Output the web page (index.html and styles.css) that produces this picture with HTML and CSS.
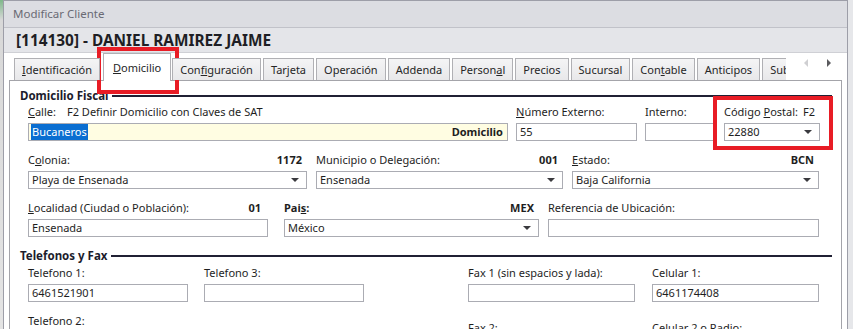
FILE: index.html
```html
<!DOCTYPE html>
<html lang="es">
<head>
  <meta charset="UTF-8" />
  <meta name="viewport" content="width=device-width, initial-scale=1.0"/>
  <title>Modificar Cliente</title>
  <link rel="stylesheet" href="styles.css">
</head>
<body>
  <div class="desk"></div>
  <div class="window">
    <div class="titlebar">Modificar Cliente</div>
    <div class="client-bar">[114130] - DANIEL RAMIREZ JAIME</div>

    <div class="content">
      <div class="tabs-row">
        <div class="tabs">
          <div class="tab"><u>I</u>dentificación</div>
          <div class="tab active"><u>D</u>omicilio</div>
          <div class="tab">Con<u>f</u>iguración</div>
          <div class="tab">Tarjeta</div>
          <div class="tab">Operación</div>
          <div class="tab">Addenda</div>
          <div class="tab">Person<u>a</u>l</div>
          <div class="tab">Precios</div>
          <div class="tab">Sucursal</div>
          <div class="tab">Con<u>t</u>able</div>
          <div class="tab">Anticipos</div>
          <div class="tab">Subclientes</div>
        </div>
        <div class="tab-arrows">
          <span class="arrow arrow-left"></span>
          <span class="arrow arrow-right"></span>
        </div>
      </div>

      <div class="panel">
        <div class="section"><span>Domicilio Fiscal</span><div class="section-line"></div></div>

        <div class="row row-first">
          <div class="field f-calle">
            <div class="label"><span><span class="calle-tag"><u>C</u>alle:</span>F2 Definir Domicilio con Claves de SAT</span></div>
            <div class="box box-yellow"><span class="selected">Bucaneros</span><b>Domicilio</b></div>
          </div>
          <div class="field f-numext">
            <div class="label"><span><u>N</u>úmero Externo:</span></div>
            <div class="box">55</div>
          </div>
          <div class="field f-interno">
            <div class="label"><span>Interno:</span></div>
            <div class="box"></div>
          </div>
          <div class="field f-cp">
            <div class="label"><span>Código <u>P</u>ostal:</span><span>F2</span></div>
            <div class="box"><span>22880</span><span class="caret"></span></div>
          </div>
        </div>

        <div class="row">
          <div class="field f-colonia">
            <div class="label"><span>C<u>o</u>lonia:</span><b>1172</b></div>
            <div class="box"><span>Playa de Ensenada</span><span class="caret"></span></div>
          </div>
          <div class="field f-municipio">
            <div class="label"><span>Municipio o Delegación:</span><b>001</b></div>
            <div class="box"><span>Ensenada</span><span class="caret"></span></div>
          </div>
          <div class="field f-estado">
            <div class="label"><span><u>E</u>stado:</span><b>BCN</b></div>
            <div class="box"><span>Baja California</span><span class="caret"></span></div>
          </div>
        </div>

        <div class="row">
          <div class="field f-localidad">
            <div class="label label-pad"><span><u>L</u>ocalidad (Ciudad o Población):</span><b>01</b></div>
            <div class="box">Ensenada</div>
          </div>
          <div class="field f-pais">
            <div class="label"><b>Pai<u>s</u>:</b><b>MEX</b></div>
            <div class="box"><span>México</span><span class="caret"></span></div>
          </div>
          <div class="field f-referencia">
            <div class="label"><span>Referencia de Ubicación:</span></div>
            <div class="box"></div>
          </div>
        </div>

        <div class="section section-phones"><span>Telefonos y Fax</span><div class="section-line"></div></div>

        <div class="row row-phones">
          <div class="field f-phone">
            <div class="label"><span>Telefono 1:</span></div>
            <div class="box">6461521901</div>
          </div>
          <div class="field f-phone f-tel3">
            <div class="label"><span>Telefono 3:</span></div>
            <div class="box"></div>
          </div>
          <div class="field f-fax f-fax1">
            <div class="label"><span>Fax 1 (sin espacios y lada):</span></div>
            <div class="box"></div>
          </div>
          <div class="field f-fax f-cel">
            <div class="label"><span>Celular 1:</span></div>
            <div class="box">6461174408</div>
          </div>
        </div>

        <div class="row row-last">
          <div class="field f-phone">
            <div class="label"><span>Telefono 2:</span></div>
          </div>
          <div class="field f-fax f-fax2">
            <div class="label label-low"><span>Fax 2:</span></div>
          </div>
          <div class="field f-fax f-cel">
            <div class="label label-low"><span>Celular 2 o Radio:</span></div>
          </div>
        </div>
      </div>
    </div>
  </div>

  <div class="mark mark-tab"></div>
  <div class="mark mark-cp"></div>
</body>
</html>
```

FILE: styles.css
```css
body {
  margin: 0;
  width: 853px;
  height: 329px;
  overflow: hidden;
  display: flex;
  font-family: "Noto Sans", "Open Sans", sans-serif;
  font-size: 11px;
  color: #1e1e1e;
  background: #e6e7ea;
  position: relative;
}

.desk {
  width: 3px;
  background: linear-gradient(#7fb88a 0, #d8d8d8 20px, #e4e4e4 100%);
}

.window {
  width: 845px;
  height: 340px;
  box-sizing: border-box;
  border: 1px solid #9d9ea8;
  background: #ffffff;
  display: flex;
  flex-direction: column;
}

.titlebar {
  height: 26px;
  line-height: 26px;
  padding-left: 9px;
  font-size: 11.5px;
  color: #6a6a74;
  background: #dcdde2;
  border-bottom: 1px solid #c1c2c9;
}

.client-bar {
  height: 24px;
  line-height: 25px;
  padding-left: 12px;
  font-size: 15.4px;
  font-weight: bold;
  color: #1e1e24;
  background: #e4e5e9;
  border-bottom: 1px solid #cfd0d5;
}

.content {
  flex: 1;
  padding: 0 5px;
}

/* tabs */

.tabs-row {
  display: flex;
  height: 28px;
  margin-bottom: -1px;
  position: relative;
  z-index: 1;
}

.tabs {
  width: 772px;
  margin-left: 5px;
  display: flex;
  align-items: flex-end;
  overflow: hidden;
}

.tab {
  flex: none;
  height: 21px;
  line-height: 21px;
  padding: 0 7px;
  margin-right: 2px;
  margin-bottom: 1px;
  border: 1px solid #b0b0b4;
  border-bottom: none;
  background: linear-gradient(#f4f4f5, #e8e8ea);
  color: #262626;
}

.tab.active {
  height: 27px;
  line-height: 28px;
  margin: 0 1px 0 1px;
  padding: 0 9px;
  background: #ffffff;
}

.tab-arrows {
  flex: 1;
  display: flex;
  align-items: flex-start;
  padding-top: 6px;
  padding-left: 18px;
  gap: 19px;
}

.arrow {
  width: 0;
  height: 0;
  border-top: 4px solid transparent;
  border-bottom: 4px solid transparent;
}

.arrow-left {
  border-right: 4px solid #cfcfd2;
}

.arrow-right {
  border-left: 4px solid #5a5a5e;
}

/* panel */

.panel {
  height: 260px;
  border: 1px solid #a4a4aa;
  border-bottom: none;
  padding-left: 10px;
}

.section {
  display: flex;
  align-items: center;
  height: 14px;
  margin-top: 7px;
  font-weight: bold;
  font-size: 11.5px;
  color: #1c1c2c;
}

.section-line {
  flex: 1;
  height: 2px;
  margin: 1px 9px 0 4px;
  background: #202034;
}

.section-phones {
  margin-top: 11px;
}

.row {
  display: flex;
  margin-top: 12px;
  padding-left: 8px;
}

.row-first {
  margin-top: 3px;
}

.row-phones {
  margin-top: 4px;
}

.field {
  display: flex;
  flex-direction: column;
  gap: 4px;
  flex: none;
}

.label {
  height: 14px;
  line-height: 14px;
  display: flex;
  justify-content: space-between;
  padding-right: 5px;
  white-space: nowrap;
}

.label-pad {
  padding-right: 7px;
}

.label-low {
  margin-top: 7px;
}

.calle-tag {
  display: inline-block;
  width: 39px;
}

.box {
  height: 18px;
  box-sizing: border-box;
  border: 1px solid #abacb3;
  padding: 0 3px;
  line-height: 16px;
  display: flex;
  justify-content: space-between;
  align-items: center;
  white-space: nowrap;
}

.box-yellow {
  background: #fffde2;
  padding: 0 4px 0 2px;
}

.selected {
  background: #0a6ed1;
  color: #ffffff;
  padding: 0 1px;
}

.caret {
  width: 0;
  height: 0;
  margin-right: 4px;
  border-left: 4px solid transparent;
  border-right: 4px solid transparent;
  border-top: 4px solid #3a3a3e;
}

/* field widths */

.f-calle { width: 480px; }
.f-numext { width: 121px; margin-left: 8px; }
.f-interno { width: 71px; margin-left: 8px; }
.f-cp { width: 96px; margin-left: 8px; }

.f-colonia { width: 279px; }
.f-municipio { width: 247px; margin-left: 9px; }
.f-estado { width: 247px; margin-left: 9px; }

.f-localidad { width: 240px; }
.f-pais { width: 255px; margin-left: 16px; }
.f-referencia { width: 271px; margin-left: 9px; }

.f-phone { width: 160px; }
.f-tel3 { margin-left: 16px; }
.f-fax { width: 167px; }
.f-fax1 { margin-left: 104px; }
.f-fax2 { margin-left: 280px; }
.f-cel { margin-left: 17px; }

/* red highlight marks drawn over the dialog */

.mark {
  position: absolute;
  box-sizing: border-box;
  border: 4px solid #e81c25;
}

.mark-tab {
  left: 97px;
  top: 47px;
  width: 82px;
  height: 47px;
}

.mark-cp {
  left: 713px;
  top: 96px;
  width: 120px;
  height: 54px;
}
```
